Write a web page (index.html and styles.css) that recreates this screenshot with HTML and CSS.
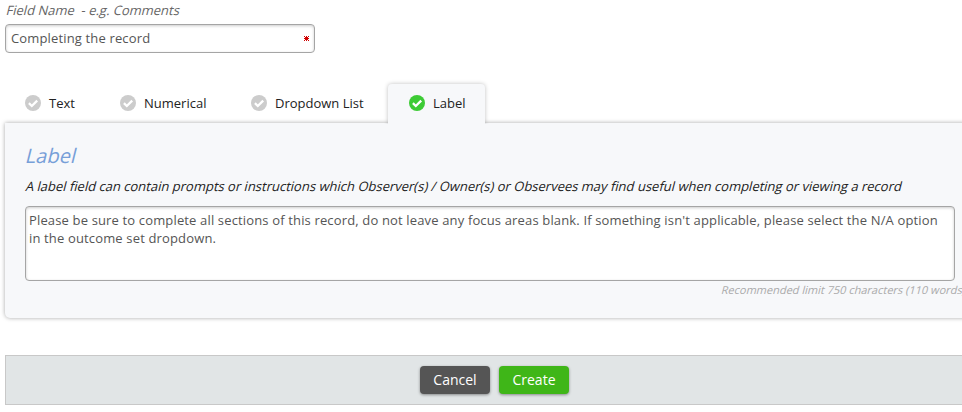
FILE: index.html
```html
<!DOCTYPE html>
<html lang="en">
<head>
    <meta charset="UTF-8">
    <title>Add Field</title>
    <link rel="stylesheet" href="styles.css">
</head>
<body>
    <form class="field-form">
        <label class="field-label slanted" for="field-name">Field Name &nbsp;- e.g. Comments</label>
        <div class="name-box">
            <input type="text" id="field-name" value="Completing the record">
            <svg class="required" viewBox="0 0 5 5" shape-rendering="crispEdges"><path d="M0 0h1v1h1V0h1v1h1V0h1v1H4v1h1v1H4v1h1v1H4V4H3v1H2V4H1v1H0V4h1V3H0V2h1V1H0z"/></svg>
        </div>

        <div class="tabs">
            <div class="tab tab-text">
                <svg class="tick" viewBox="0 0 16 16"><circle cx="8" cy="8" r="8"/><path d="M3.9 8.2l2.9 2.8 5.4-5.4"/></svg>
                <span>Text</span>
            </div>
            <div class="tab tab-numerical">
                <svg class="tick" viewBox="0 0 16 16"><circle cx="8" cy="8" r="8"/><path d="M3.9 8.2l2.9 2.8 5.4-5.4"/></svg>
                <span>Numerical</span>
            </div>
            <div class="tab tab-dropdown">
                <svg class="tick" viewBox="0 0 16 16"><circle cx="8" cy="8" r="8"/><path d="M3.9 8.2l2.9 2.8 5.4-5.4"/></svg>
                <span>Dropdown List</span>
            </div>
            <div class="tab tab-label active">
                <svg class="tick" viewBox="0 0 16 16"><circle cx="8" cy="8" r="8"/><path d="M3.9 8.2l2.9 2.8 5.4-5.4"/></svg>
                <span>Label</span>
            </div>
        </div>

        <div class="panel">
            <h2 class="slanted">Label</h2>
            <p class="intro slanted">A label field can contain prompts or instructions which Observer(s) / Owner(s) or Observees may find useful when completing or viewing a record</p>
            <textarea class="label-text">Please be sure to complete all sections of this record, do not leave any focus areas blank. If something isn't applicable, please select the N/A option in the outcome set dropdown.</textarea>
            <p class="hint slanted">Recommended limit 750 characters (110 words)</p>
        </div>

        <div class="actions">
            <button type="button" class="btn cancel">Cancel</button>
            <button type="button" class="btn create">Create</button>
        </div>
    </form>
</body>
</html>
```
FILE: styles.css
```css
* {
    box-sizing: border-box;
}
body {
    margin: 0;
    font-family: "Open Sans", sans-serif;
    font-size: 13px;
    color: #222;
    background-color: #fff;
    overflow: hidden;
}
.field-form {
    width: 979px;
    margin-left: 5px;
}
/* slant the regular face instead of using the italic one */
.slanted {
    transform: skewX(-14deg);
    transform-origin: 0 72%;
}
.field-label {
    display: block;
    height: 24px;
    line-height: 21px;
    color: #666;
}
.name-box {
    display: flex;
    align-items: center;
    width: 310px;
    height: 29px;
    padding: 0 5px 0 5px;
    border: 1px solid #a5a5a5;
    border-radius: 4px;
    box-shadow: inset 0 1px 3px rgba(0, 0, 0, 0.2);
}
.name-box input {
    flex: 1;
    min-width: 0;
    height: 20px;
    margin-bottom: 2px;
    padding: 0;
    border: none;
    outline: none;
    background: transparent;
    font: inherit;
    letter-spacing: 0.15px;
    color: #555;
}
.required {
    width: 5px;
    height: 5px;
    fill: #d00000;
}
.tabs {
    display: flex;
    height: 39px;
    margin-top: 31px;
}
.tab {
    display: flex;
    align-items: center;
    gap: 8px;
    height: 39px;
    padding: 0 0 1px 20px;
}
.tab-text {
    width: 95px;
}
.tab-numerical {
    width: 131px;
}
.tab-dropdown {
    width: 157px;
}
.tab-label {
    width: 97px;
    padding-left: 21px;
}
.tab.active {
    position: relative;
    z-index: 1;
    height: 40px;
    padding-bottom: 2px;
    background-color: #f7f8fa;
    border-radius: 4px 4px 0 0;
    box-shadow: 0 0 4px rgba(0, 0, 0, 0.25);
    clip-path: inset(-5px -5px 0 -5px);
}
.tick {
    width: 16px;
    height: 16px;
    fill: #ccc;
}
.tick path {
    fill: none;
    stroke: #fff;
    stroke-width: 2.3;
}
.active .tick {
    fill: #3dcb35;
}
.panel {
    height: 195px;
    padding: 19px 20px;
    background-color: #f7f8fa;
    border-radius: 0 0 5px 5px;
    box-shadow: 0 0 4px rgba(0, 0, 0, 0.35);
}
.panel h2 {
    height: 27px;
    margin: 0;
    line-height: 27px;
    font-size: 20px;
    font-weight: normal;
    color: #779fd8;
}
.intro {
    margin: 8px 0 10px;
    line-height: 19px;
    white-space: nowrap;
}
.label-text {
    display: block;
    width: 930px;
    height: 75px;
    padding: 4px 3px;
    border: 1px solid #a5a5a5;
    border-radius: 4px;
    box-shadow: inset 0 1px 3px rgba(0, 0, 0, 0.2);
    outline: none;
    resize: none;
    overflow: hidden;
    font: inherit;
    line-height: 18px;
    letter-spacing: 0.15px;
    color: #555;
}
.hint {
    margin: 0 -1px 0 0;
    line-height: 18px;
    font-size: 11px;
    text-align: right;
    color: #aaa;
}
.actions {
    display: flex;
    justify-content: center;
    align-items: center;
    gap: 9px;
    height: 50px;
    margin-top: 37px;
    background-color: #e1e5e6;
    border: 1px solid #c8c8c8;
}
.btn {
    width: 70px;
    height: 28px;
    padding: 0 0 2px;
    border: none;
    border-radius: 4px;
    box-shadow: 0 1px 3px rgba(0, 0, 0, 0.4);
    font-family: inherit;
    font-size: 14px;
    color: #fff;
    cursor: pointer;
}
.cancel {
    background-color: #555;
}
.create {
    background-color: #3fb618;
}
```
